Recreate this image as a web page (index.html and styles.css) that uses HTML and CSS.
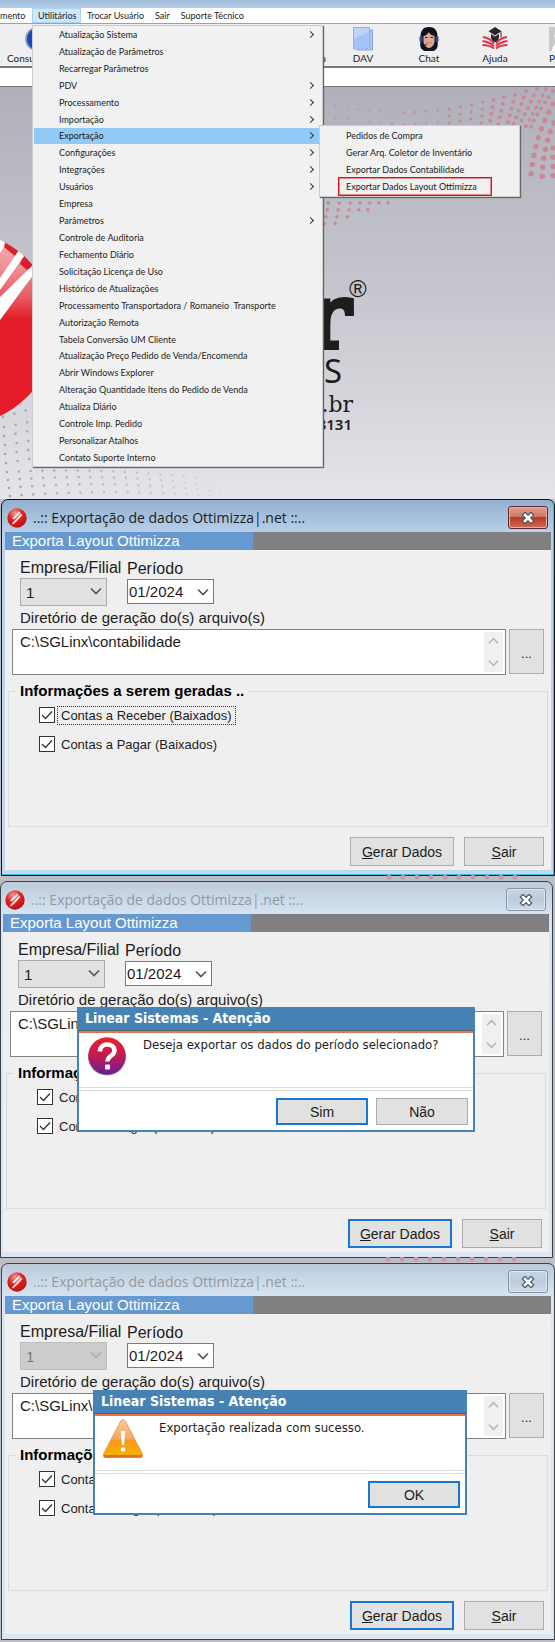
FILE: index.html
```html
<!DOCTYPE html>
<html lang="pt-BR">
<head>
<meta charset="utf-8">
<title>Exportação de dados Ottimizza</title>
<link rel="stylesheet" href="styles.css">
</head>
<body>
<svg class="defs" aria-hidden="true">
  <defs>
    <radialGradient id="ball" cx="40%" cy="25%" r="80%"><stop offset="0" stop-color="#f79a94"/><stop offset=".45" stop-color="#e2231f"/><stop offset="1" stop-color="#b80f10"/></radialGradient>
    <linearGradient id="quest" x1="0" y1="0" x2="0" y2="1"><stop offset="0" stop-color="#f0202c"/><stop offset=".5" stop-color="#c01c50"/><stop offset="1" stop-color="#6a1e9c"/></linearGradient>
    <linearGradient id="amber" x1="0" y1="0" x2="0" y2="1"><stop offset="0" stop-color="#f8c9a4"/><stop offset=".5" stop-color="#f6a860"/><stop offset=".55" stop-color="#f59a18"/><stop offset="1" stop-color="#fbb400"/></linearGradient>
    <symbol id="logo" viewBox="0 0 20 20"><circle cx="10" cy="10" r="9.700" fill="url(#ball)"/><path d="M5 10.500 12 3.500l1.500 1.500L7 11.500zM7 13.500 14 5.500l1.500 1.500L9 14zM5 15.500 8 12l1.500 1.500L6 16.500z" fill="#fff" opacity=".85"/></symbol>
    <symbol id="chev" viewBox="0 0 12 8"><path d="M1 1.500 6 6.500 11 1.500" fill="none" stroke="currentColor" stroke-width="1.700"/></symbol>
    <symbol id="cross" viewBox="0 0 14 12"><path d="M4 3 10 9M10 3 4 9" stroke="#4b5768" stroke-width="5" stroke-linecap="square"/><path d="M4 3 10 9M10 3 4 9" stroke="#fff" stroke-width="2.600" stroke-linecap="square"/></symbol>
  </defs>
</svg>

<section class="desktop">
  <div class="strip"></div>
  <nav class="menubar">
    <button class="cut">mento</button><button class="open">Utilitários</button><button>Trocar Usuário</button><button>Sair</button><button>Suporte Técnico</button>
  </nav>
  <div class="toolbar">
    <div class="tool first">
      <svg width="66" height="24" viewBox="0 0 66 24"><circle cx="30" cy="12" r="12" fill="#8fa0c8"/><circle cx="31" cy="12" r="11" fill="#1b45b4"/></svg>
      <span>Consu</span>
    </div>
    <div class="tool last"><span>a</span></div>
    <button class="tool">
      <svg width="20" height="24" viewBox="0 0 20 24"><path d="M4 3h15.500v20H4z" fill="#a9c4f4" stroke="#86a6e2"/><path d="M.5.500h16v18.500l-3 3H.500z" fill="#bcd4fb" stroke="#8fb0ee"/><path d="M1 12 16 5v13l-3 3H1z" fill="#a4c3f8"/><path d="m13 22 .5-3.500 3 .500z" fill="#e4efff" stroke="#7f9fdc" stroke-width=".6"/></svg>
      <span>DAV</span>
    </button>
    <button class="tool">
      <svg width="20" height="24" viewBox="0 0 20 24"><path d="M10 0C3 0 1.500 5 1.500 10c0 6-1 9 1 12 2 2 13 2 15 0 2-3 1-6 1-12C18.500 5 17 0 10 0z" fill="#0e1224"/><rect x=".5" y="9" width="3" height="6" rx="1.500" fill="#28489c"/><rect x="16.500" y="9" width="3" height="6" rx="1.500" fill="#28489c"/><path d="M4.500 9C7 8.500 9 7 9.500 5c1.500 2.500 3.500 3.500 6 4v5c0 4-3 7-5.500 7S4.500 18 4.500 14z" fill="#e0a98c"/><path d="M6 10.500h2.500M11.500 10.500H14" stroke="#222"/><path d="M7.500 16h5q-2.500 3-5 0z" fill="#fff" stroke="#8a3434" stroke-width=".5"/><path d="M3 15q2 4 5 3" fill="none" stroke="#234" /><path d="M7 21h6l3 3H4z" fill="#17191f"/></svg>
      <span>Chat</span>
    </button>
    <button class="tool">
      <svg width="26" height="24" viewBox="0 0 26 24"><path d="M13 0 19.500 4.200 13 8.500 6.500 4.200z" fill="#26282b"/><path d="M9 7l4 2.500L17 7v3c0 3-2 5-4 5s-4-2-4-5z" fill="#26282b"/><path d="M19 4.500v6" stroke="#26282b"/><path d="M1 10q7 1 11 6.500M.5 14q7 1 11.500 5M.5 18q7 0 11.500 3.500M25 10q-7 1-11 6.500M25.500 14q-7 1-11.500 5M25.500 18q-7 0-11.500 3.500" fill="none" stroke="#d4384a" stroke-width="2"/></svg>
      <span>Ajuda</span>
    </button>
    <button class="tool person">
      <svg width="24" height="24" viewBox="0 0 24 24"><path d="M0 0h24v24H0z" fill="#c9c9c9"/><circle cx="12" cy="9" r="6.500" fill="#fff"/><path d="M3 24q1-9 9-9t9 9z" fill="#fff"/></svg>
      <span>P</span>
    </button>
  </div>
  <div class="blank"></div>
  <div class="wall">
    <svg class="art" width="555" height="411" viewBox="0 87 555 411">
      <defs>
        <linearGradient id="shine" x1="0" y1="0" x2="0" y2="1"><stop offset="0" stop-color="#f2b0b4"/><stop offset=".16" stop-color="#f0989e"/><stop offset=".34" stop-color="#e85a62"/><stop offset=".46" stop-color="#e31c27"/><stop offset="1" stop-color="#e31c27"/></linearGradient>
        <linearGradient id="fade" gradientUnits="userSpaceOnUse" x1="0" y1="0" x2="230" y2="0"><stop offset="0" stop-color="#a3a3ab"/><stop offset="1" stop-color="#a3a3ab" stop-opacity=".1"/></linearGradient>
        <clipPath id="disc"><circle cx="-41" cy="328" r="97"/></clipPath>
      </defs>
      <g fill="none" stroke="#c98f9d" stroke-linecap="round" stroke-dasharray="0 12">
        <g stroke-width="2"><path d="M335.500 106v13M347 107v13M358 109v12M369.500 110v13M381 111v13"/></g>
        <g stroke-width="2.500"><path d="M392 112v13M403.500 112.500v13M415 112v13M426 111.500v13M437.500 110.500v13"/></g>
      </g>
      <g fill="none" stroke="#cc8795" stroke-linecap="round" stroke-dasharray="0 7">
        <g stroke-width="3.200"><path d="M449 109v17M460.500 107l-1 19M471.500 105l-1 20M483 102l-2 24"/></g>
        <g stroke-width="4"><path d="M493.500 100l-4 26M504 97l-6 29M515 95l-8 31M526 91l-13 35M537 89l-18 37M546 89l-20 37M553 91q-18 25-22 36"/></g>
        <g stroke-width="5.500" stroke-dasharray="0 9.200"><path d="M553 104q-19 34-22 72M554 123q-12 26-12 58M553 148v34"/></g>
        <g stroke-width="3.600"><path d="M329 196q-1 14-5 29M340 196q-1 14-5 28M351 196q-1 12-4 23M361 196q-1 10-4 20M371 196q-1 9-4 15M381 196l-3 10M390 196l-2 7"/></g>
      </g>
      <g fill="none" stroke="url(#fade)" stroke-width="2.600" stroke-linecap="round" stroke-dasharray="0 11.800">
        <path d="M3 417 34 408M4 427l30-6M4 436l30-6M5 445l30-5M5 454l30-5M6 463l30-5M7 472q100-5 200 7M8 480q100-8 210 6M9 488q100-9 220 4M10 496q100-8 220 1"/>
      </g>
      <g clip-path="url(#disc)">
        <path d="M-140 231H60v194H-140z" fill="url(#shine)"/>
        <path d="M5 240 21 250 15 256 4 247zM24 252 38 264 27 270 20 264z" fill="#d91f2c"/>
        <path d="M0 236h5v7l-1 4-4 6zM19 250l6 5L0 290v-12zM34 264v10L0 320v-23z" fill="#fff"/>
      </g>
      <g fill="#1d1d1d">
        <text x="351" y="348" text-anchor="end" font-family="DejaVu Serif" font-weight="700" font-size="92" stroke="#1d1d1d" stroke-width="4">r</text>
        <text x="349" y="297" font-family="Liberation Sans" font-size="24">®</text>
        <text x="324" y="383" font-family="Noto Sans, sans-serif" font-size="33">S</text>
        <text x="353" y="412" text-anchor="end" font-family="DejaVu Serif" font-size="22">.br</text>
        <text x="352" y="430" text-anchor="end" font-family="Noto Sans" font-weight="600" font-size="15">3131</text>
      </g>
    </svg>
  </div>

  <ul class="menu main">
    <li class="sub"><button>Atualização Sistema</button></li>
    <li><button>Atualização de Parâmetros</button></li>
    <li><button>Recarregar Parâmetros</button></li>
    <li class="sub"><button>PDV</button></li>
    <li class="sub"><button>Processamento</button></li>
    <li class="sub"><button>Importação</button></li>
    <li class="sub on"><button>Exportação</button></li>
    <li class="sub"><button>Configurações</button></li>
    <li class="sub"><button>Integrações</button></li>
    <li class="sub"><button>Usuários</button></li>
    <li><button>Empresa</button></li>
    <li class="sub"><button>Parâmetros</button></li>
    <li><button>Controle de Auditoria</button></li>
    <li><button>Fechamento Diário</button></li>
    <li><button>Solicitação Licença de Uso</button></li>
    <li><button>Histórico de Atualizações</button></li>
    <li><button>Processamento Transportadora / Romaneio&nbsp; Transporte</button></li>
    <li><button>Autorização Remota</button></li>
    <li><button>Tabela Conversão UM Cliente</button></li>
    <li><button>Atualização Preço Pedido de Venda/Encomenda</button></li>
    <li><button>Abrir Windows Explorer</button></li>
    <li><button>Alteração Quantidade Itens do Pedido de Venda</button></li>
    <li><button>Atualiza Diário</button></li>
    <li><button>Controle Imp. Pedido</button></li>
    <li><button>Personalizar Atalhos</button></li>
    <li><button>Contato Suporte Interno</button></li>
  </ul>
  <ul class="menu side">
    <li><button>Pedidos de Compra</button></li>
    <li><button>Gerar Arq. Coletor de Inventário</button></li>
    <li><button>Exportar Dados Contabilidade</button></li>
    <li class="marked"><button>Exportar Dados Layout Ottimizza</button></li>
  </ul>
</section>

<section class="window active">
  <header class="caption"><svg class="logo"><use href="#logo"/></svg><h2>..:: Exportação de dados Ottimizza|.net ::..</h2><button class="close" aria-label="Fechar"><svg width="14" height="12"><use href="#cross"/></svg></button></header>
  <form class="client">
    <div class="band"><span>Exporta Layout Ottimizza</span></div>
    <div class="fields">
      <div class="field"><label for="e1">Empresa/Filial</label><span class="combo grey"><select id="e1"><option>1</option></select><svg><use href="#chev"/></svg></span></div>
      <div class="field"><label for="p1">Período</label><span class="combo"><select id="p1"><option>01/2024</option></select><svg><use href="#chev"/></svg></span></div>
    </div>
    <label class="dirlabel" for="d1">Diretório de geração do(s) arquivo(s)</label>
    <div class="dir"><div class="memo"><textarea id="d1">C:\SGLinx\contabilidade</textarea><span class="scroll"><svg class="up"><use href="#chev"/></svg><svg><use href="#chev"/></svg></span></div><button type="button" class="browse">...</button></div>
    <fieldset><legend>Informações a serem geradas ..</legend>
      <label class="check focus"><input type="checkbox" checked><span>Contas a Receber (Baixados)</span></label>
      <label class="check"><input type="checkbox" checked><span>Contas a Pagar (Baixados)</span></label>
    </fieldset>
    <div class="actions"><button type="button" class="btn wide"><u>G</u>erar Dados</button><button type="button" class="btn"><u>S</u>air</button></div>
  </form>
</section>

<section class="window second">
  <header class="caption"><svg class="logo"><use href="#logo"/></svg><h2>..:: Exportação de dados Ottimizza|.net ::..</h2><button class="close" aria-label="Fechar"><svg width="14" height="12"><use href="#cross"/></svg></button></header>
  <form class="client">
    <div class="band"><span>Exporta Layout Ottimizza</span></div>
    <div class="fields">
      <div class="field"><label for="e2">Empresa/Filial</label><span class="combo grey"><select id="e2"><option>1</option></select><svg><use href="#chev"/></svg></span></div>
      <div class="field"><label for="p2">Período</label><span class="combo"><select id="p2"><option>01/2024</option></select><svg><use href="#chev"/></svg></span></div>
    </div>
    <label class="dirlabel" for="d2">Diretório de geração do(s) arquivo(s)</label>
    <div class="dir"><div class="memo"><textarea id="d2">C:\SGLinx\contabilidade</textarea><span class="scroll"><svg class="up"><use href="#chev"/></svg><svg><use href="#chev"/></svg></span></div><button type="button" class="browse">...</button></div>
    <fieldset><legend>Informações a serem geradas ..</legend>
      <label class="check"><input type="checkbox" checked><span>Contas a Receber (Baixados)</span></label>
      <label class="check"><input type="checkbox" checked><span>Contas a Pagar (Baixados)</span></label>
    </fieldset>
    <div class="actions"><button type="button" class="btn wide default"><u>G</u>erar Dados</button><button type="button" class="btn"><u>S</u>air</button></div>
  </form>
  <div class="dialog ask" role="dialog" aria-labelledby="t2">
    <h3 id="t2">Linear Sistemas - Atenção</h3>
    <div class="message">
      <svg width="40" height="40" viewBox="0 0 40 40"><circle cx="20" cy="20.500" r="19" fill="#8b8b98"/><circle cx="20" cy="20" r="18.600" fill="url(#quest)"/><path d="M13 15.500c0-9.500 14.500-9 14.500-1 0 5.500-7 5-7 11" fill="none" stroke="#fff" stroke-width="4.500"/><rect x="18" y="28.500" width="5" height="5" rx="1" fill="#fff"/></svg>
      <p>Deseja exportar os dados do período selecionado?</p>
    </div>
    <div class="answers"><button class="btn default">Sim</button><button class="btn">Não</button></div>
  </div>
</section>

<section class="window third">
  <header class="caption"><svg class="logo"><use href="#logo"/></svg><h2>..:: Exportação de dados Ottimizza|.net ::..</h2><button class="close" aria-label="Fechar"><svg width="14" height="12"><use href="#cross"/></svg></button></header>
  <form class="client">
    <div class="band"><span>Exporta Layout Ottimizza</span></div>
    <div class="fields">
      <div class="field"><label for="e3">Empresa/Filial</label><span class="combo grey off"><select id="e3" disabled><option>1</option></select><svg><use href="#chev"/></svg></span></div>
      <div class="field"><label for="p3">Período</label><span class="combo"><select id="p3"><option>01/2024</option></select><svg><use href="#chev"/></svg></span></div>
    </div>
    <label class="dirlabel" for="d3">Diretório de geração do(s) arquivo(s)</label>
    <div class="dir"><div class="memo"><textarea id="d3">C:\SGLinx\contabilidade</textarea><span class="scroll"><svg class="up"><use href="#chev"/></svg><svg><use href="#chev"/></svg></span></div><button type="button" class="browse">...</button></div>
    <fieldset><legend>Informações a serem geradas ..</legend>
      <label class="check"><input type="checkbox" checked><span>Contas a Receber (Baixados)</span></label>
      <label class="check"><input type="checkbox" checked><span>Contas a Pagar (Baixados)</span></label>
    </fieldset>
    <div class="actions"><button type="button" class="btn wide default"><u>G</u>erar Dados</button><button type="button" class="btn"><u>S</u>air</button></div>
  </form>
  <div class="dialog done" role="dialog" aria-labelledby="t3">
    <h3 id="t3">Linear Sistemas - Atenção</h3>
    <div class="message">
      <svg width="40" height="40" viewBox="0 0 40 40"><path d="M17.500 2.500q2.500-4 5 0L39.500 35q1.500 3.500-2.500 3.500H3Q-1 38.500.5 35z" fill="url(#amber)" stroke="#d98a3a" stroke-width=".7"/><path d="M1 36q-.5 2.500 3 2.500h32q3.500 0 3-2.500z" fill="#d9701c"/><path d="M17.800 12h4.400l-1 14h-2.400z" fill="#fff"/><circle cx="20" cy="30.500" r="2.300" fill="#fff"/></svg>
      <p>Exportação realizada com sucesso.</p>
    </div>
    <div class="answers"><button class="btn default">OK</button></div>
  </div>
</section>
</body>
</html>
```
FILE: styles.css
```css
* { box-sizing: border-box; }
body { margin: 0; background: #bdbdc6; color: #1c1c1c; font-family: "Liberation Sans", Arial, sans-serif; display: flex; flex-direction: column; }
button { font: inherit; color: inherit; border: 0; padding: 0; background: none; }
.defs { position: absolute; width: 0; height: 0; }

/* Application desktop */
.desktop { position: relative; height: 499px; display: flex; flex-direction: column; overflow: hidden; font-family: Lato, sans-serif; font-size: 9px; }
.strip { height: 8px; background: linear-gradient(#9fbcdb, #b4cde6); }
.menubar { display: flex; height: 16px; background: #fff; border-bottom: 1px solid #a0a0a0; }
.menubar button { padding: 0 5px 0 6px; white-space: nowrap; }
.menubar .cut { width: 32px; padding: 0; text-align: left; }
.menubar .open { background: #cce8ff; width: 49px; box-shadow: inset 0 0 0 1px #a8d4f5; }
.toolbar { display: flex; height: 44px; background: #efefef; border-bottom: 2px solid #777; overflow: hidden; }
.tool { flex: none; width: 66px; display: flex; flex-direction: column; align-items: center; justify-content: flex-end; padding-bottom: 2px; font-size: 10px; line-height: 12px; gap: 1px; }
.tool.first { margin-left: 7px; align-items: flex-start; }
.tool.last { width: 257px; align-items: flex-end; padding-right: 4px; }
.tool.person { align-items: flex-start; padding-left: 21px; }
.blank { height: 19px; background: #fff; border-bottom: 1px solid #777; }
.wall { flex: 1; overflow: hidden; background: linear-gradient(#b0b0bb, #c6c6ce 50%, #e4e4e9); }
.art { display: block; }

.menu { position: absolute; margin: 0; list-style: none; display: grid; grid-auto-rows: 1fr; background: #f1f1f1; border: 1px solid #ccc; box-shadow: 1px 1px 1px #666; white-space: nowrap; }
.menu.main { top: 25px; left: 32px; width: 291px; bottom: 32px; padding: 0 1px; }
.menu.side { top: 125px; left: 319px; width: 201px; height: 72px; padding: 1px; }
.menu li { display: flex; align-items: center; padding: 0 8px 0 25px; }
.menu li button { flex: 1; text-align: left; }
.menu .sub::after { content: ""; width: 4px; height: 4px; border: solid #333; border-width: 1px 1px 0 0; rotate: 45deg; }
.menu .on { background: #91c9f7; }
.menu .marked { margin: 0 27px 0 18px; padding-left: 7px; outline: 1px solid #e01010; box-shadow: inset 0 0 0 1px #e0303088; }

/* Export windows */
.window { position: relative; height: 377px; margin-bottom: 5px; display: flex; flex-direction: column; border: 1px solid #3c4048; border-radius: 7px 7px 0 0; padding: 0 3px 5px; background: linear-gradient(#bccbdb, #d7e4f2 33px, #dce6f1); }
.window.active { margin-left: 1px; border-color: #10181c; background: linear-gradient(#93b0cf, #b8d0ea 33px, #c3d8ee); box-shadow: inset -1px -1px 0 #34c3d9; }
.window.second { margin-right: 2px; padding-left: 2px; }
.window.third { margin-left: 1px; margin-bottom: 0; }
.window:not(.third)::after { content: ""; position: absolute; top: 100%; left: 380px; width: 140px; height: 5px; background: radial-gradient(circle at 7px 2px, #cf96a2 2px, transparent 3px) 0 0 / 14px 6px; }
.caption { display: flex; align-items: center; gap: 6px; height: 32px; padding: 3px 3px 0 2px; }
.caption h2 { margin: 0; flex: 1; font: 400 14px/20px "Open Sans", "Noto Sans", sans-serif; white-space: nowrap; }
.window:not(.active) h2 { color: #94999f; }
.logo { width: 20px; height: 20px; }
.close { width: 40px; height: 23px; display: grid; place-items: center; border: 1px solid #8794a8; border-radius: 3px; background: linear-gradient(#c9d5e3, #bccbdc 50%, #d0dcea); box-shadow: inset 0 0 0 1px #dbe5ef; }
.active .close { border-color: #5b2a30; background: linear-gradient(#e0a094, #d0786a 45%, #b93a26 50%, #cf6a50); box-shadow: inset 0 0 0 1px #e5b0a6; }
.client { flex: 1; display: flex; flex-direction: column; background: #efefef; }
.band { height: 18px; background: #808080; color: #fff; font-size: 15px; line-height: 17px; }
.band span { display: block; width: 248px; height: 18px; padding-left: 7px; background: #6699cf; }
.fields { display: flex; gap: 20px; padding: 8px 15px 0; height: 56px; }
.field { display: flex; flex-direction: column; align-items: flex-start; font-size: 16px; line-height: 20px; width: 87px; white-space: nowrap; }
.combo { position: relative; width: 87px; height: 25px; }
.combo.grey { height: 28px; }
.field:nth-child(2) { padding-top: 1px; }
.combo select { appearance: none; width: 100%; height: 100%; padding: 0 0 0 1px; border: 1px solid #7a7a7a; border-radius: 0; background: #fff; font: 15px "Liberation Sans", sans-serif; color: #1c1c1c; }
.combo.grey select { background: #e1e1e1; border-color: #adadad; padding-left: 5px; }
.combo.off select { background: #ccc; border-color: #bfbfbf; color: #7b7b7b; opacity: 1; }
.combo svg { position: absolute; right: 5px; top: 9px; width: 12px; height: 8px; color: #555; pointer-events: none; }
.off svg { color: #aaa; }
.dirlabel { padding-left: 15px; font-size: 15px; line-height: 23px; }
.dir { display: flex; gap: 3px; padding: 0 7px; height: 46px; }
.memo { flex: 1; display: flex; height: 46px; border: 1px solid #828282; background: #fff; padding: 2px; }
textarea { flex: 1; border: 0; padding: 0 5px; resize: none; overflow: hidden; font: 15px/20px "Liberation Sans", sans-serif; color: #1c1c1c; background: none; }
.scroll { width: 19px; background: #f0f0f0; display: flex; flex-direction: column; justify-content: space-between; align-items: center; padding: 5px 0; }
.scroll svg { width: 11px; height: 8px; color: #b5b5b5; }
.scroll .up { rotate: 180deg; }
.browse { width: 35px; height: 45px; background: #e1e1e1; border: 1px solid #adadad; font-size: 13px; padding-top: 4px; }
fieldset { margin: 7px 3px 0; padding: 6px 0 0 30px; border: 1px solid #dcdcdc; height: 145px; display: flex; flex-direction: column; gap: 11px; align-items: flex-start; }
legend { margin-left: -23px; padding: 0 4px; font-size: 15px; line-height: 18px; font-weight: 700; color: #000; }
.check { display: flex; align-items: center; gap: 3px; height: 18px; font-size: 13px; line-height: 17px; }
.check input { appearance: none; margin: 0; width: 16px; height: 16px; border: 1px solid #333; background: #fff url("data:image/svg+xml,%3Csvg xmlns='http://www.w3.org/2000/svg' viewBox='0 0 14 14'%3E%3Cpath d='M2 7l3.500 3.500L12 3.500' fill='none' stroke='%23333' stroke-width='1.300'/%3E%3C/svg%3E"); }
.check span { padding: 0 3px; }
.focus span { outline: 1px dotted #333; }
.actions { display: flex; justify-content: flex-end; gap: 10px; padding: 10px 7px 0; }
.btn { width: 80px; height: 29px; background: #e1e1e1; border: 1px solid #adadad; font-size: 14px; }
.btn.wide { width: 104px; }
.btn.default { border: 2px solid #1777d2; }

/* Message boxes */
.dialog { position: absolute; height: 125px; display: flex; flex-direction: column; background: #fff; border: 2px solid #4682b4; }
.ask { top: 125px; left: 76px; width: 398px; }
.done { top: 126px; left: 91px; width: 374px; }
.dialog h3 { margin: -1px; height: 23px; padding-left: 7px; background: #4682b4; color: #fff; font: 700 14px/21px "DejaVu Sans Condensed", "DejaVu Sans", sans-serif; border-bottom: 1px solid #50606c; }
.message { height: 57px; display: flex; gap: 16px; padding: 3px 8px 0; margin-top: 1px; border-top: 2px solid #e8744f; border-bottom: 1px solid #ddd; }
.message p { margin: 0; font: 13px/18px "DejaVu Sans Condensed", "DejaVu Sans", sans-serif; white-space: nowrap; }
.answers { flex: 1; display: flex; justify-content: flex-end; gap: 8px; padding: 7px 5px 0; margin-top: 2px; border-top: 1px solid #ddd; }
.answers .btn { width: 92px; height: 27px; }
```
